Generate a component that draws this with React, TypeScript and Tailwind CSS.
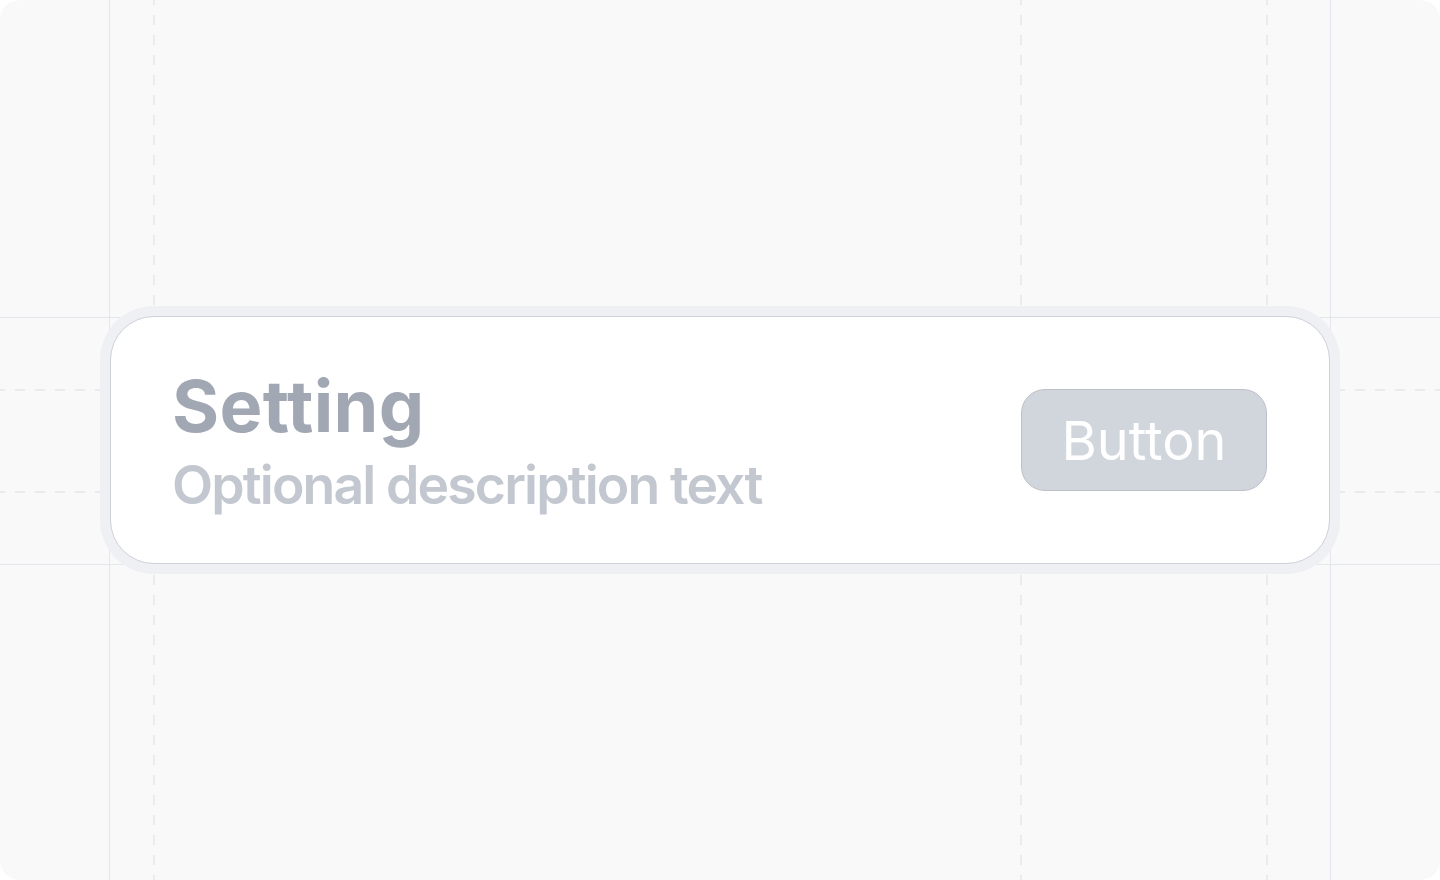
export default function App() {
  return (
    <div className="w-[1440px] h-[880px] bg-white">
      <div
        className="relative w-full h-full rounded-[20px] bg-[#f9f9fa] overflow-hidden flex items-center justify-center"
        style={{ fontFamily: 'Inter, "Noto Sans", sans-serif' }}
      >
        {/* guide lines */}
        <svg className="absolute inset-0" width="1440" height="880">
          <g stroke="#e3e6eb" strokeWidth="1">
            <line x1="109.5" y1="0" x2="109.5" y2="880" />
            <line x1="1330.5" y1="0" x2="1330.5" y2="880" />
            <line x1="0" y1="317.5" x2="1440" y2="317.5" />
            <line x1="0" y1="564.5" x2="1440" y2="564.5" />
          </g>
          <g stroke="#e3e6eb" strokeWidth="1.5" strokeDasharray="10 10" strokeDashoffset="5">
            <line x1="154" y1="0" x2="154" y2="880" />
            <line x1="1021" y1="0" x2="1021" y2="880" />
            <line x1="1267" y1="0" x2="1267" y2="880" />
            <line x1="0" y1="390" x2="1440" y2="390" />
            <line x1="0" y1="492" x2="1440" y2="492" />
          </g>
        </svg>

        <div className="relative w-[1220px] h-[248px] rounded-[44px] bg-white border border-[#cdd1d8] shadow-[0_0_0_10px_#eff0f3] pl-[61px] pr-[62px] flex items-center justify-between">
          <div className="flex flex-col pt-[5px]">
            <span className="text-[72px] leading-[80px] font-bold tracking-[0.005em] text-[#a2a8b3]">Setting</span>
            <span className="mt-[4px] text-[53.5px] leading-[70px] font-semibold tracking-[-0.035em] text-[#c2c7d0]">
              Optional description text
            </span>
          </div>
          <button className="w-[246px] h-[102px] rounded-[24px] bg-[#d1d5dc] border border-[#bcc1ca] text-white text-[54px] font-normal flex items-center justify-center">
            Button
          </button>
        </div>
      </div>
    </div>
  );
}
